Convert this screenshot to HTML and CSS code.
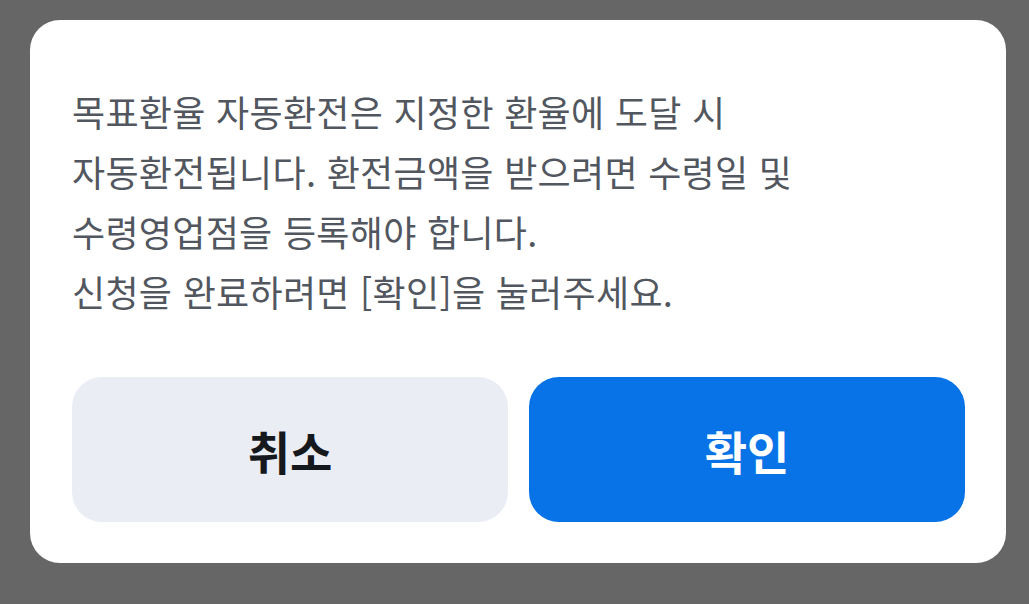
FILE: index.html
```html
<!DOCTYPE html>
<html lang="ko">
<head>
    <meta charset="UTF-8">
    <meta name="viewport" content="width=device-width, initial-scale=1.0">
    <title>목표환율 자동환전</title>
    <link rel="stylesheet" href="styles.css">
</head>
<body>
    <!-- Confirm dialog -->
    <div class="dialog">
        <p class="dialog-message">
            목표환율 자동환전은 지정한 환율에 도달 시<br>
            자동환전됩니다. 환전금액을 받으려면 수령일 및<br>
            수령영업점을 등록해야 합니다.<br>
            신청을 완료하려면 [확인]을 눌러주세요.
        </p>
        <div class="dialog-actions">
            <button class="btn btn-cancel">취소</button>
            <button class="btn btn-confirm">확인</button>
        </div>
    </div>
</body>
</html>
```

FILE: styles.css
```css
/* Global Styles */
body {
    font-family: "Noto Sans CJK KR", "Noto Sans", sans-serif;
    margin: 0;
    padding: 20px 23px 0 30px;
    background-color: #666666;
}

/* Dialog */
.dialog {
    background-color: #fff;
    border-radius: 30px;
    padding: 61px 41px 41px 42px;
}

.dialog-message {
    margin: 0 0 56px;
    font-size: 36px;
    line-height: 60px;
    color: #52575f;
    letter-spacing: 0.3px;
}

.dialog-actions {
    display: flex;
    gap: 21px;
}

.btn {
    flex: 1;
    height: 145px;
    padding: 0;
    border: none;
    border-radius: 30px;
    font-family: inherit;
    font-size: 46px;
    font-weight: bold;
    cursor: pointer;
}

.btn-cancel {
    background-color: #eaedf4;
    color: #15181c;
}

.btn-confirm {
    background-color: #0873e6;
    color: #fff;
}
```
